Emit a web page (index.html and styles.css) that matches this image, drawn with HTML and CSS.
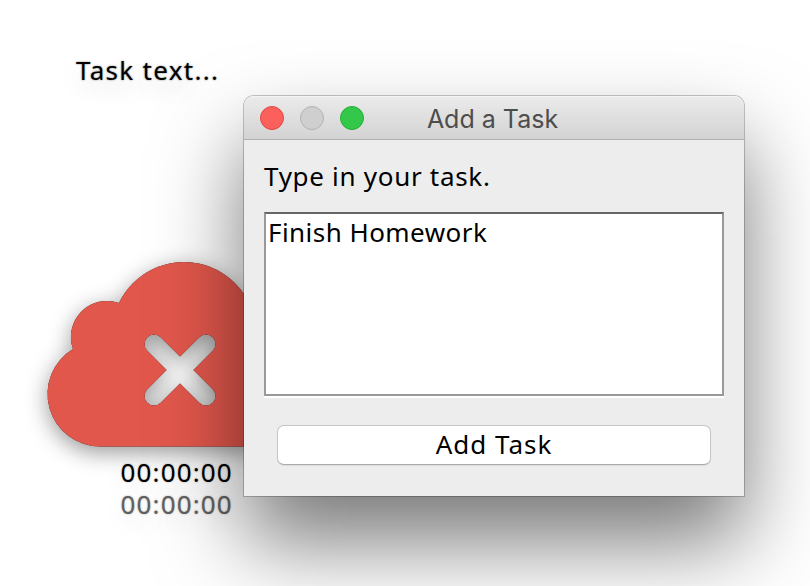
FILE: index.html
```
<!DOCTYPE html>
<html lang="en">
<head>
<meta charset="utf-8">
<title>Add a Task</title>
<link rel="stylesheet" href="styles.css">
</head>
<body>
<main class="desktop">
  <section class="widget">
    <p class="task-name"><span>Task text...</span></p>
    <svg class="cloud" viewBox="40 250 232 210" aria-hidden="true">
      <defs>
        <mask id="cross" maskUnits="userSpaceOnUse" x="0" y="200" width="400" height="300">
          <rect x="0" y="200" width="400" height="300" fill="#fff"/>
          <path d="M154 344L206 396M206 344L154 396" stroke="#000" stroke-width="19" stroke-linecap="round"/>
        </mask>
      </defs>
      <g mask="url(#cross)">
        <path d="M100 446.5A52.5 52.5 0 0 1 73 349A36 36 0 0 1 119 303A72 72 0 0 1 256 334V446.5Z" fill="#e2574c"/>
      </g>
    </svg>
    <p class="timer"><span>00:00:00</span></p>
    <p class="timer total"><span>00:00:00</span></p>
  </section>
  <section class="window">
    <header class="titlebar">
      <div class="lights"><i class="light close"></i><i class="light minimize"></i><i class="light expand"></i></div>
      <h1 class="title"><span>Add a Task</span></h1>
    </header>
    <div class="content">
      <p class="prompt"><span>Type in your task.</span></p>
      <div class="field"><span>Finish Homework</span></div>
      <button class="add"><span>Add Task</span></button>
    </div>
  </section>
</main>
</body>
</html>
```
FILE: styles.css
```
* { box-sizing: border-box; }
body { margin: 0; background: #fff; }
p, h1 { margin: 0; font-weight: 400; }
.desktop {
  position: relative;
  width: 810px;
  height: 586px;
  overflow: hidden;
  background: #fff;
  font: 26px/32px "Noto Sans", "Open Sans", sans-serif;
  color: #000;
}
.widget { width: 272px; padding: 54px 0 0 40px; white-space: nowrap; }
.task-name {
  padding-left: 36px;
  letter-spacing: 1.3px;
  text-shadow: 0 0 2px rgba(0,0,0,.5), 0 10px 24px rgba(0,0,0,.18);
}
.cloud {
  display: block;
  width: 232px;
  height: 210px;
  margin-top: 164px;
  overflow: visible;
  filter: drop-shadow(0 0 .7px rgba(0,0,0,.9)) drop-shadow(0 6px 11px rgba(0,0,0,.4));
}
.timer {
  margin-top: -4px;
  padding-left: 80.5px;
  letter-spacing: 1.15px;
  text-shadow: 0 0 2px rgba(0,0,0,.3), 0 10px 24px rgba(0,0,0,.12);
}
.timer.total { margin-top: 0; color: #606060; }
.window {
  position: absolute;
  left: 244px;
  top: 96px;
  width: 500px;
  height: 400px;
  border-radius: 10px 10px 0 0;
  background: #ededed;
  box-shadow: 0 0 0 1px rgba(0,0,0,.22), 0 46px 86px rgba(0,0,0,.53);
}
.titlebar {
  display: grid;
  grid-template-columns: 120px 257px 123px;
  align-items: center;
  height: 44px;
  border-radius: 10px 10px 0 0;
  border-bottom: 1px solid #b1b1b1;
  background: linear-gradient(#ebebeb, #d3d3d3);
  box-shadow: inset 0 1px #f5f5f5;
}
.lights { display: flex; gap: 16px; padding-left: 16px; }
.light { width: 24px; height: 24px; border-radius: 50%; border: 1px solid; }
.close { background: #fc605c; border-color: #df4744; }
.minimize { background: #cfcfcf; border-color: #b2b2b2; }
.expand { background: #34c84a; border-color: #25ad35; }
.title {
  justify-self: center;
  padding-top: 2px;
  font: 25px/32px Inter, Roboto, sans-serif;
  color: #4d4d4d;
  white-space: nowrap;
}
.content { padding: 20px 20px 0; }
.prompt { letter-spacing: 0.7px; white-space: nowrap; }
.field {
  height: 184px;
  margin-top: 20px;
  padding: 2px 2px;
  border: 2px solid #999;
  border-top-color: #666;
  background: #fff;
  box-shadow: 0 2px #fff;
  letter-spacing: 0.45px;
}
.add {
  display: block;
  width: 434px;
  height: 40px;
  margin: 29px 0 0 13px;
  padding: 0 0 2px;
  border: 1px solid #c6c6c6;
  border-bottom-color: #acacac;
  border-radius: 7px;
  background: #fff;
  box-shadow: 0 1px 1px rgba(0,0,0,.08);
  font: inherit;
  letter-spacing: 1px;
  color: #000;
}
```
